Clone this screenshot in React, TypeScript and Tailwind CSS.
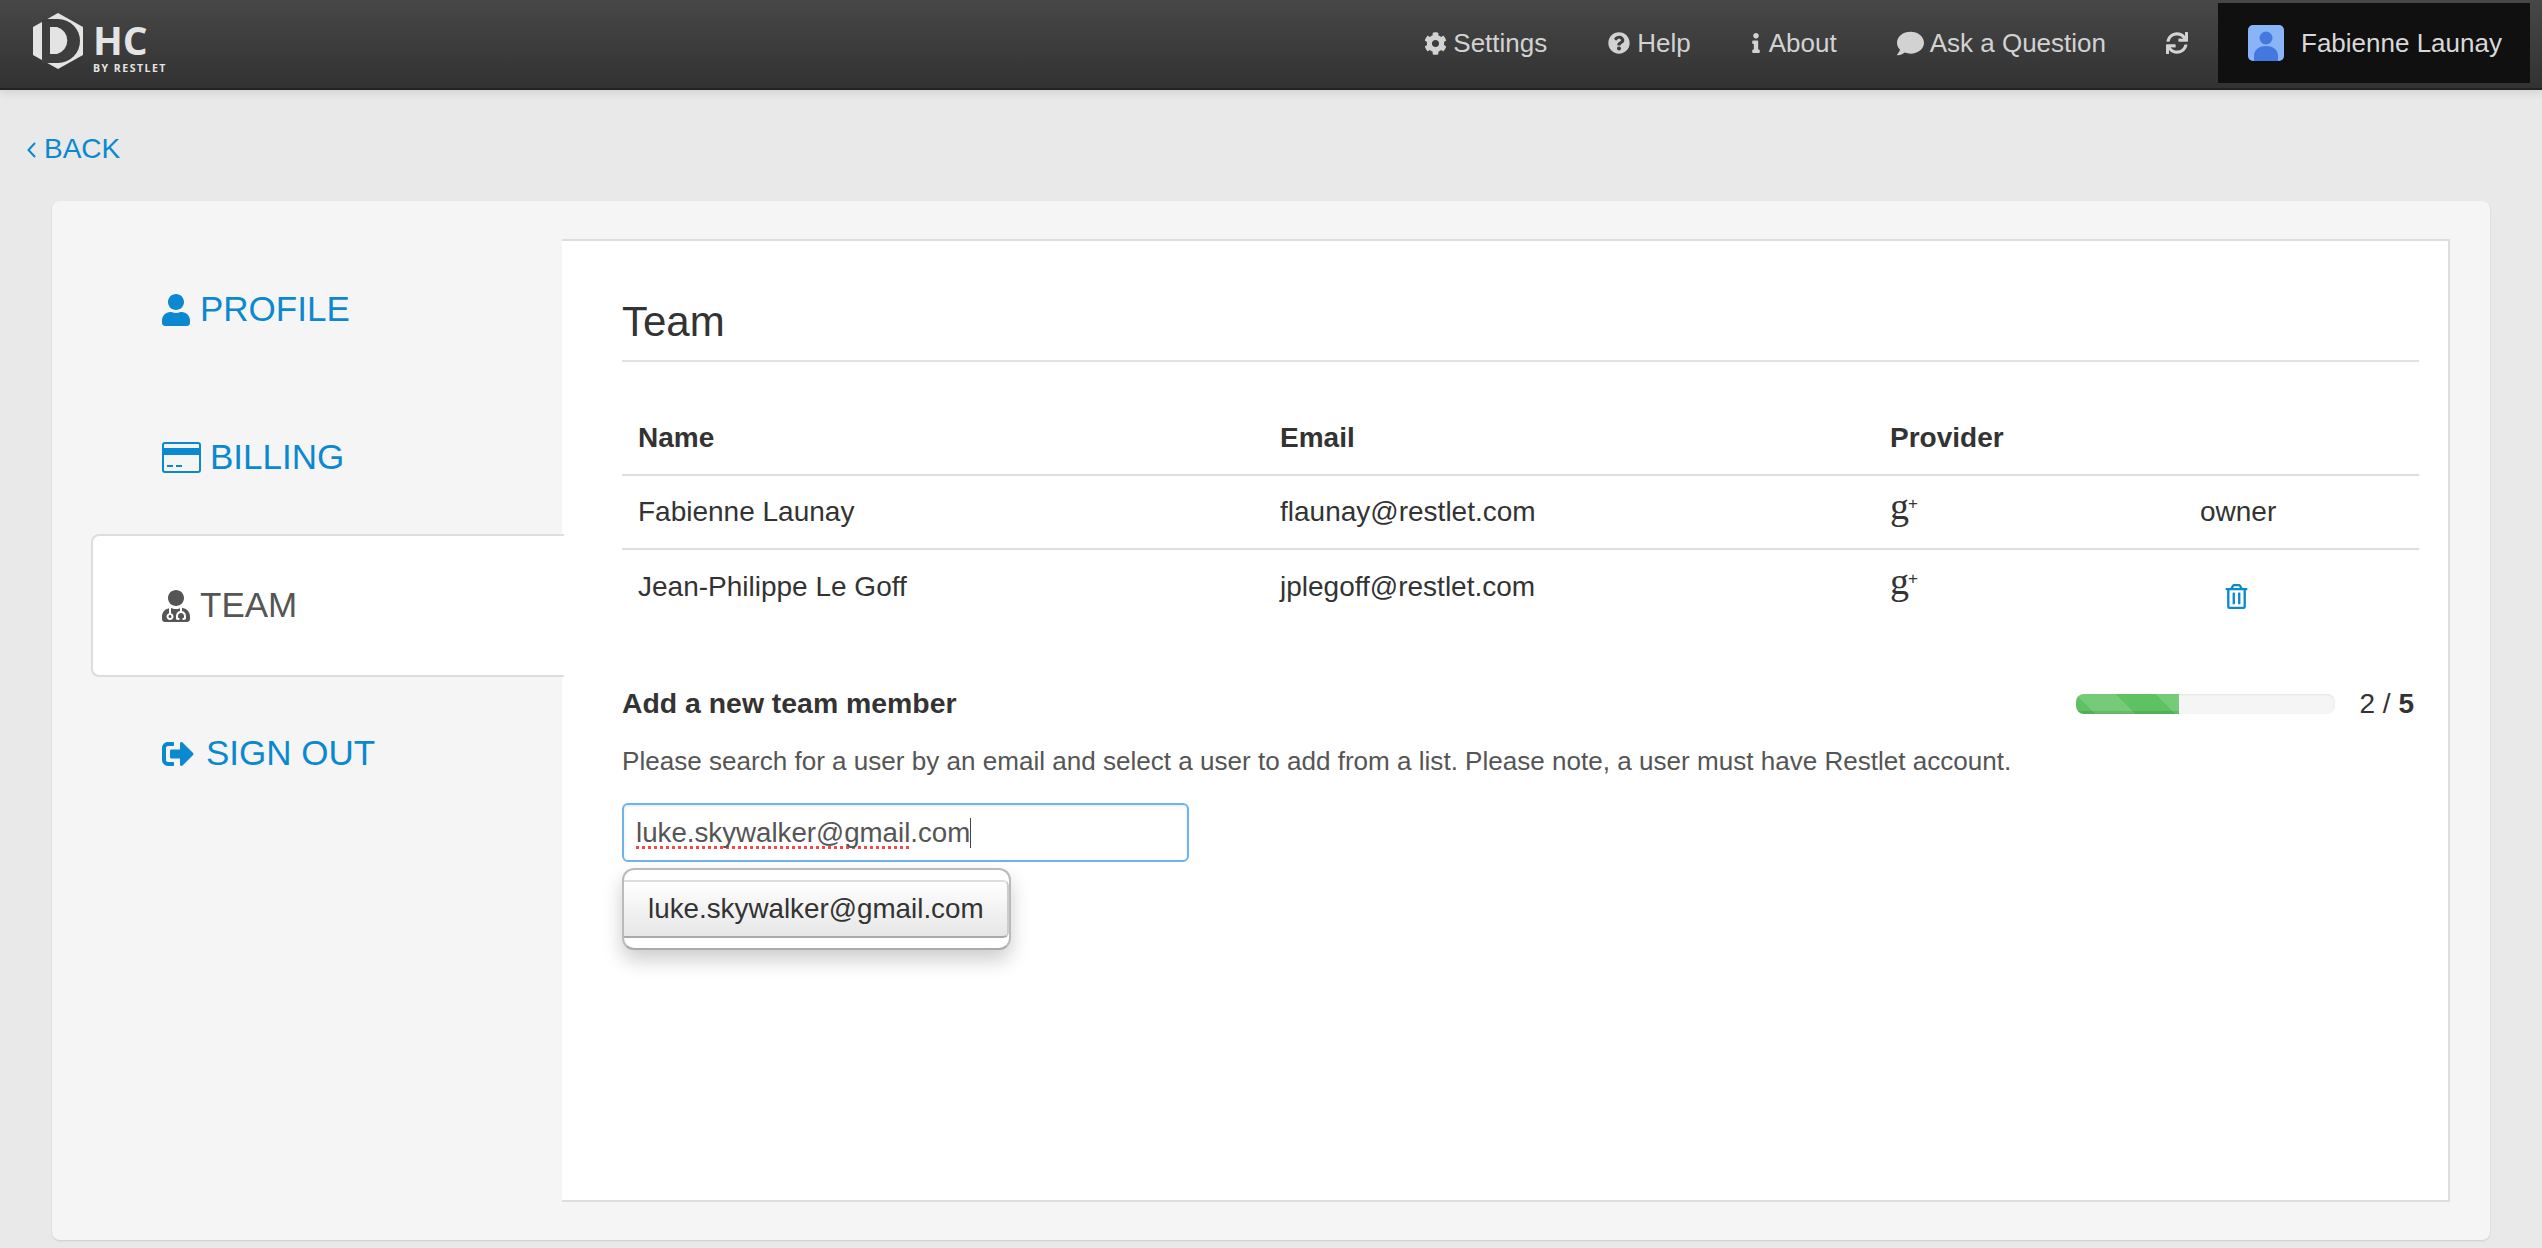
import { FaCog, FaComment, FaInfo, FaQuestionCircle, FaRegTrashAlt, FaSignOutAlt, FaSync, FaUser, FaUserMd } from "react-icons/fa";
import type { ReactNode } from "react";

const font = "font-['Liberation_Sans',Arial,sans-serif]";

function Logo() {
  return (
    <div className="flex items-start ml-[33px] mt-[13px]">
      <svg width="50" height="56" viewBox="33 13 50 56">
        <polygon points="58,13 83,27 83,55 58,69 33,55 33,27" fill="#e4e4e4" />
        <path d="M42 19 H58 A22 22 0 0 1 58 63 H42 Z" fill="#3e3e3e" />
        <path d="M50 27 H57 A14 14 0 0 1 57 54 H50 Z" fill="#e4e4e4" />
      </svg>
      <div className="ml-[10px] flex flex-col text-[#e4e4e4] font-['Open_Sans',sans-serif]">
        <span className="text-[39px] leading-[38px] mt-[8px] font-bold">HC</span>
        <span className="text-[10.5px] leading-[12px] mt-[3px] font-bold tracking-[1.5px] whitespace-nowrap">BY RESTLET</span>
      </div>
    </div>
  );
}

function NavItem({ icon, label, className }: { icon: ReactNode; label: string; className: string }) {
  return (
    <div className={`flex items-center text-[26px] text-[#d2d2d2] gap-[7px] ${className}`}>
      {icon}
      <span>{label}</span>
    </div>
  );
}

function Navbar() {
  return (
    <div className="h-[90px] flex justify-between bg-[linear-gradient(#474747,#323232)] border-b-2 border-[#222] shadow-[0_2px_10px_rgba(0,0,0,0.12)] relative">
      <Logo />
      <div className="flex items-center pr-[12px] pb-[2px]">
        <div className="flex items-center">
          <NavItem icon={<FaCog className="text-[23px] -mr-[1px]" />} label="Settings" className="" />
          <NavItem icon={<FaQuestionCircle className="text-[22px]" />} label="Help" className="ml-[61px]" />
          <NavItem icon={<FaInfo className="text-[20px] -mr-[4px]" />} label="About" className="ml-[55px]" />
          <NavItem icon={<FaComment className="text-[27px] -mr-[1px]" />} label="Ask a Question" className="ml-[60px]" />
          <FaSync className="text-[22px] text-[#d2d2d2] ml-[60px]" />
        </div>
        <div className="ml-[30px] w-[312px] h-[80px] bg-[#101010] flex items-center pl-[30px] text-[26px] text-[#d8d8d8] gap-[17px]">
          <svg width="36" height="36" viewBox="0 0 36 36">
            <rect width="36" height="36" rx="5" fill="#8ab4f8" />
            <circle cx="18" cy="13" r="6.5" fill="#4577e0" />
            <path d="M6 36 V31 C6 24 12 21 18 21 C24 21 30 24 30 31 V36 Z" fill="#4577e0" />
          </svg>
          <span>Fabienne Launay</span>
        </div>
      </div>
    </div>
  );
}

function CardIcon() {
  return (
    <svg width="39" height="31" viewBox="0 0 39 31" className="-mr-[1px]">
      <rect x="1" y="1" width="37" height="29" rx="2" fill="none" stroke="#0a88d0" strokeWidth="2" />
      <rect x="1" y="6" width="37" height="7" fill="#0a88d0" />
      <rect x="5" y="23" width="6" height="2" fill="#0a88d0" />
      <rect x="14" y="23" width="6" height="2" fill="#0a88d0" />
    </svg>
  );
}

function SideTab({ icon, label, active }: { icon: ReactNode; label: string; active?: boolean }) {
  return (
    <div
      className={
        active
          ? "h-[143px] flex items-center pl-[69px] text-[35px] gap-[10px] text-[#555] bg-white border-2 border-r-0 border-[#ddd] rounded-l-lg -mr-[2px] relative"
          : "h-[143px] flex items-center pl-[71px] text-[35px] gap-[10px] text-[#0a88d0]"
      }
    >
      {icon}
      <span>{label}</span>
    </div>
  );
}

function GPlus() {
  return (
    <span className="font-['Liberation_Serif',serif] text-[38px] leading-none text-[#333] flex items-start -mt-[12px]">
      g<span className="text-[17px] mt-[8px] -ml-[1px] font-['Liberation_Sans',sans-serif]">+</span>
    </span>
  );
}

function MemberRow({ name, email, last, border }: { name: string; email: string; last: ReactNode; border?: boolean }) {
  return (
    <div className={`h-[74px] grid grid-cols-[642px_610px_310px_1fr] items-center pl-[16px] text-[28px] text-[#333] ${border ? "border-b-2 border-[#ddd]" : ""}`}>
      <span>{name}</span>
      <span>{email}</span>
      <GPlus />
      {last}
    </div>
  );
}

export default function App() {
  return (
    <div className={`${font} h-[1248px] w-full overflow-hidden bg-[#e9e9e9]`}>
      <Navbar />
      <div className="h-[111px] flex items-center pl-[27px] gap-[8px] text-[28px] text-[#0a88d0] pt-[6px]">
        <svg width="9" height="16" viewBox="0 0 9 16" className="mt-[2px]">
          <polyline points="8,1 1.5,8 8,15" fill="none" stroke="#0a88d0" strokeWidth="2" />
        </svg>
        <span>BACK</span>
      </div>
      <div className="mx-[52px] h-[1039px] bg-[#f5f5f5] rounded-lg shadow-[0_1px_2px_rgba(0,0,0,0.12)] flex pl-[39px] pr-[40px] pt-[38px]">
        <div className="w-[471px] shrink-0 flex flex-col gap-[5px] -mt-[1px]">
          <SideTab icon={<FaUser className="text-[32px] -ml-[2px] -mr-[2px]" />} label="PROFILE" />
          <SideTab icon={<CardIcon />} label="BILLING" />
          <SideTab icon={<FaUserMd className="text-[32px] -ml-[2px] -mr-[2px]" />} label="TEAM" active />
          <SideTab icon={<FaSignOutAlt className="text-[32px] mr-[2px]" />} label="SIGN OUT" />
        </div>
        <div className="flex-1 h-[963px] bg-white border-2 border-l-0 border-[#ddd] pl-[60px] pr-[29px] pt-[51px] text-[#333]">
          <div className="text-[42px] leading-[60px] border-b-2 border-[#e2e2e2] h-[70px]">Team</div>
          <div className="mt-[41px] h-[73px] grid grid-cols-[642px_610px_310px_1fr] pl-[16px] items-center font-bold text-[28px] border-b-2 border-[#ddd] pb-[2px]">
            <span>Name</span>
            <span>Email</span>
            <span>Provider</span>
          </div>
          <MemberRow
            name="Fabienne Launay"
            email="flaunay@restlet.com"
            last={<span>owner</span>}
            border
          />
          <MemberRow
            name="Jean-Philippe Le Goff"
            email="jplegoff@restlet.com"
            last={<FaRegTrashAlt className="text-[25px] text-[#0a88d0] ml-[24px] mt-[18px]" />}
          />
          <div className="mt-[59px] flex items-center justify-between h-[40px]">
            <span className="font-bold text-[28.4px]">Add a new team member</span>
            <div className="flex items-center gap-[25px] mt-[2px]">
              <div className="w-[259px] h-[20px] bg-[#f5f5f5] rounded-lg overflow-hidden shadow-[inset_0_1px_2px_rgba(0,0,0,0.08)]">
                <div className="w-[40%] h-full bg-[#5ec262] bg-[linear-gradient(45deg,rgba(255,255,255,0.15)_25%,transparent_25%,transparent_50%,rgba(255,255,255,0.15)_50%,rgba(255,255,255,0.15)_75%,transparent_75%)] bg-[length:80px_80px] shadow-[inset_0_-3px_0_rgba(0,0,0,0.1)]" />
              </div>
              <span className="text-[28px] mr-[5px] whitespace-nowrap">
                2 / <b>5</b>
              </span>
            </div>
          </div>
          <p className="mt-[18px] text-[26.07px] leading-[40px] text-[#555]">
            Please search for a user by an email and select a user to add from a list. Please note, a user must have Restlet account.
          </p>
          <div className="mt-[22px] w-[567px] h-[59px] border-2 border-[#6fb3ea] rounded-md pl-[12px] flex items-center text-[27.7px] text-[#555] shadow-[inset_0_1px_3px_rgba(0,0,0,0.1)]">
            <span className="underline decoration-dotted decoration-[#f44] decoration-[3px] underline-offset-[4px] [text-decoration-skip-ink:none]">luke.skywalker@gmail</span>
            <span>.com</span>
            <span className="w-[1px] h-[30px] bg-[#444]" />
          </div>
          <div className="mt-[6px] w-[389px] h-[82px] border-2 border-[#bbb] border-b-[#aaa] rounded-xl bg-white py-[10px] shadow-[0_10px_20px_rgba(0,0,0,0.2)]">
            <div className="h-[58px] flex items-center pl-[24px] text-[27.8px] text-[#333] border-t-2 border-b-2 border-r-2 border-t-[#ddd] border-b-[#aaa] border-r-[#ccc] rounded-r-md bg-[linear-gradient(#fff,#e6e6e6)] whitespace-nowrap">
              luke.skywalker@gmail.com
            </div>
          </div>
        </div>
      </div>
    </div>
  );
}
